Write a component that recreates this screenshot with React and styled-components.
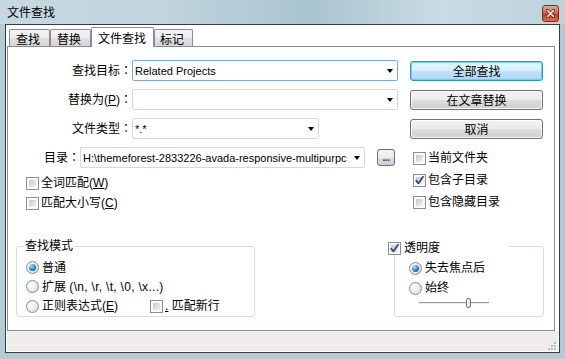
import React from "react";
import styled, { createGlobalStyle, css } from "styled-components";

const GlobalStyle = createGlobalStyle`
  html, body { margin: 0; padding: 0; background: #fff; }
  body {
    font-family: "Liberation Sans", "Noto Sans CJK SC", sans-serif;
    font-size: 12px;
    color: #000;
  }
  * { box-sizing: border-box; }
`;

const Window = styled.div`
  width: 565px;
  height: 359px;
  display: flex;
  flex-direction: column;
  background: #b3cbd5;
  overflow: hidden;
`;

const TitleBar = styled.div`
  height: 24px;
  flex: none;
  display: flex;
  align-items: flex-start;
  justify-content: space-between;
  padding: 0 6px 0 7px;
  background: linear-gradient(
    to right,
    #c6d9e1 0%,
    #bfd4dd 30%,
    #a9c4cf 55%,
    #c9dce3 78%,
    #bcd2db 100%
  );
`;

const Title = styled.span`
  font-family: "Noto Sans CJK SC", sans-serif;
  font-size: 12px;
  line-height: 24px;
`;

const CloseButton = styled.div`
  width: 17px;
  height: 17px;
  margin-top: 5px;
  border: 1px solid #7a2a1a;
  border-radius: 3px;
  background: linear-gradient(#e9a996 0%, #d9674a 45%, #c63d1e 55%, #d8704b 100%);
  display: flex;
  align-items: center;
  justify-content: center;
`;

const Frame = styled.div`
  flex: 1;
  display: flex;
  flex-direction: column;
  padding: 0 5px 6px 5px;
`;

const Client = styled.div`
  flex: 1;
  display: flex;
  flex-direction: column;
  border: 1px solid #3a3a3a;
  padding: 1px;
  background: #fff;
`;

const TabStrip = styled.div`
  height: 19px;
  margin: 1px 0 0 2px;
  display: flex;
  align-items: flex-end;
  position: relative;
  z-index: 2;
  flex: none;
`;

const Tab = styled.div`
  width: ${(p) => p.$w}px;
  height: ${(p) => (p.$active ? 20 : 17)}px;
  margin-bottom: ${(p) => (p.$active ? -1 : 0)}px;
  border: 1px solid #898c95;
  border-bottom: none;
  border-radius: 2px 2px 0 0;
  display: flex;
  align-items: center;
  justify-content: center;
  padding: ${(p) => (p.$active ? "1px 1px 0 0" : "2px 3px 0 0")};
  font-family: "Noto Sans CJK SC", sans-serif;
  font-size: 12px;
  line-height: 14px;
  background: ${(p) =>
    p.$active
      ? "#fff"
      : "linear-gradient(#f4f4f4 0%, #ececec 50%, #e0e0e0 51%, #d6d6d6 100%)"};
`;

const Pane = styled.div`
  width: 548px;
  height: 285px;
  flex: none;
  border: 1px solid #898c95;
  background: #fff;
  padding-top: 13px;
  display: flex;
  flex-direction: column;
`;

const Top = styled.div`
  display: grid;
  grid-template-columns: 402px 133px;
`;

const Column = styled.div`
  display: flex;
  flex-direction: column;
`;

const FieldRows = styled.div`
  display: flex;
  flex-direction: column;
  gap: 8px;
`;

const FieldRow = styled.div`
  height: 21px;
  display: flex;
  align-items: center;
`;

const FieldLabel = styled.span`
  width: ${(p) => p.$w}px;
  flex: none;
  text-align: right;
  white-space: nowrap;
  line-height: 14px;
`;

const Colon = styled.span`
  font-family: "Noto Sans CJK JP", sans-serif;
`;

const Combo = styled.div`
  width: ${(p) => p.$w}px;
  height: 21px;
  flex: none;
  border: 1px solid ${(p) => (p.$focus ? "#7eaad6" : "#d5d9df")};
  border-radius: 2px;
  background: #fff;
  display: flex;
  align-items: center;
  padding: 0 4px 0 2px;
  font-size: 11px;
  white-space: nowrap;
  overflow: hidden;
`;

const ComboText = styled.span`
  flex: 1;
  overflow: hidden;
`;

const Arrow = styled.span`
  flex: none;
  width: 0;
  height: 0;
  margin-left: 6px;
  border-left: 3.5px solid transparent;
  border-right: 3.5px solid transparent;
  border-top: 4px solid #000;
`;

const BrowseButton = styled.div`
  width: 18px;
  height: 17px;
  margin-left: 12px;
  flex: none;
  border: 1px solid #707070;
  border-radius: 3px;
  background: linear-gradient(#f3f3f3 0%, #ebebeb 50%, #dddddd 51%, #cfcfcf 100%);
  display: flex;
  align-items: flex-end;
  justify-content: center;
  padding-bottom: 1px;
  font-size: 10px;
  font-weight: bold;
  color: #1d3f7c;
  line-height: 12px;
  letter-spacing: -0.5px;
`;

const CheckList = styled.div`
  display: flex;
  flex-direction: column;
  margin-top: ${(p) => p.$mt}px;
  padding-left: ${(p) => p.$pl}px;
`;

const CheckRow = styled.div`
  height: ${(p) => p.$h}px;
  display: flex;
  align-items: center;
  gap: ${(p) => p.$gap ?? 2}px;
  white-space: nowrap;
  line-height: 14px;
`;

const Box = styled.span`
  width: 13px;
  height: 13px;
  flex: none;
  border: 1px solid #8e8f8f;
  padding: 2px;
  background: linear-gradient(135deg, #c8c8c8, #f2f2f2) content-box, #fbfbfb;
  display: flex;
  align-items: center;
  justify-content: center;
`;

const CheckSvg = styled.svg`
  width: 11px;
  height: 11px;
  margin: -2px;
  flex: none;
`;

const RadioCircle = styled.span`
  width: 13px;
  height: 13px;
  flex: none;
  border-radius: 50%;
  border: 1px solid #8b8b8b;
  background: radial-gradient(circle at 35% 35%, #ffffff 0%, #ececec 50%, #cfcfcf 100%);
  display: flex;
  align-items: center;
  justify-content: center;
  ${(p) =>
    p.$on &&
    css`
      &::after {
        content: "";
        width: 7px;
        height: 7px;
        border-radius: 50%;
        background: radial-gradient(circle at 35% 30%, #b6e6ff 0%, #3a93d8 45%, #0c3f7a 100%);
      }
    `}
`;

const Button = styled.div`
  height: 20px;
  margin-top: ${(p) => p.$mt}px;
  border: 1px solid ${(p) => (p.$default ? "#3c91c4" : "#707070")};
  border-radius: 3px;
  display: flex;
  align-items: center;
  justify-content: center;
  font-family: "Noto Sans CJK SC", sans-serif;
  font-size: 12px;
  line-height: 14px;
  background: ${(p) =>
    p.$default
      ? "linear-gradient(#e6f5fc 0%, #d6eefb 50%, #bfe3f7 51%, #a9d8f2 100%)"
      : "linear-gradient(#f3f3f3 0%, #ebebeb 50%, #dddddd 51%, #cfcfcf 100%)"};
  box-shadow: ${(p) =>
    p.$default ? "inset 0 0 0 1px #6fd0f5" : "inset 0 0 0 1px rgba(255,255,255,0.8)"};
`;

const Bottom = styled.div`
  margin-top: 33px;
  display: flex;
`;

const Group = styled.div`
  position: relative;
  width: ${(p) => p.$w}px;
  height: 71px;
  margin-left: ${(p) => p.$ml}px;
  border: 1px solid #d3dde4;
  border-radius: 3px;
  padding: 11px 0 0 ${(p) => p.$pl}px;
  display: flex;
  flex-direction: column;
  flex: none;
`;

const Legend = styled.span`
  position: absolute;
  top: -8px;
  left: 7px;
  padding: 0 1px;
  background: #fff;
  line-height: 14px;
`;

const GroupHeader = styled.div`
  position: absolute;
  top: -6px;
  left: -7px;
  width: 120px;
  height: 14px;
  background: #fff;
  display: flex;
  align-items: center;
  gap: 3px;
  line-height: 14px;
`;

const OptionSlot = styled.div`
  width: ${(p) => p.$w}px;
  flex: none;
  display: flex;
  align-items: center;
  gap: 3px;
`;

const Slider = styled.div`
  position: relative;
  width: 70px;
  height: 10px;
  margin-left: 10px;
`;

const Track = styled.div`
  margin-top: 4px;
  height: 2px;
  border-top: 1px solid #9c9c9c;
  border-bottom: 1px solid #ececec;
`;

const Thumb = styled.div`
  position: absolute;
  left: 47px;
  top: 0;
  width: 5px;
  height: 10px;
  border: 1px solid #7a7a7a;
  border-radius: 2px;
  background: linear-gradient(to right, #fdfdfd, #dcdcdc);
`;

const StatusBar = styled.div`
  flex: 1;
  background: #efeceb;
  display: flex;
  justify-content: flex-end;
  align-items: flex-end;
  padding: 0 1px 0 0;
`;

const U = styled.span`
  text-decoration: underline;
`;

const Latin = styled.span`
  font-size: 12px;
  letter-spacing: 0.3px;
`;

function Check({ on }) {
  return (
    <Box>
      {on && (
        <CheckSvg viewBox="0 0 11 11">
          <path
            d="M2.2 5.6 L4.4 8.4 L9 1.8"
            fill="none"
            stroke="#2b4c93"
            strokeWidth="1.8"
            strokeLinecap="round"
            strokeLinejoin="round"
          />
        </CheckSvg>
      )}
    </Box>
  );
}

function CheckItem({ on, h, children }) {
  return (
    <CheckRow $h={h}>
      <Check on={on} />
      <span>{children}</span>
    </CheckRow>
  );
}

function RadioItem({ on, children }) {
  return (
    <CheckRow $h={20} $gap={3}>
      <RadioCircle $on={on} />
      <span>{children}</span>
    </CheckRow>
  );
}

function Grip() {
  const dots = [
    [8, 2],
    [5, 5],
    [8, 5],
    [2, 8],
    [5, 8],
    [8, 8],
  ];
  return (
    <svg width="11" height="11" viewBox="0 0 11 11">
      {dots.map(([x, y]) => (
        <g key={`${x}-${y}`}>
          <rect x={x + 1} y={y + 1} width="2" height="2" fill="#ffffff" />
          <rect x={x} y={y} width="2" height="2" fill="#b9b6b4" />
        </g>
      ))}
    </svg>
  );
}

export default function App() {
  return (
    <>
      <GlobalStyle />
      <Window>
        <TitleBar>
          <Title>文件查找</Title>
          <CloseButton>
            <svg width="9" height="9" viewBox="0 0 9 9">
              <path d="M1.5 1.5 L7.5 7.5 M7.5 1.5 L1.5 7.5" stroke="#5a1a10" strokeWidth="3" strokeLinecap="round" />
              <path d="M1.5 1.5 L7.5 7.5 M7.5 1.5 L1.5 7.5" stroke="#ffffff" strokeWidth="1.6" strokeLinecap="round" />
            </svg>
          </CloseButton>
        </TitleBar>
        <Frame>
          <Client>
            <TabStrip>
              <Tab $w={41}>查找</Tab>
              <Tab $w={41}>替换</Tab>
              <Tab $w={63} $active>
                文件查找
              </Tab>
              <Tab $w={39}>标记</Tab>
            </TabStrip>
            <Pane>
              <Top>
                <Column>
                  <FieldRows>
                    <FieldRow>
                      <FieldLabel $w={124}>
                        查找目标<Colon>：</Colon>
                      </FieldLabel>
                      <Combo $w={266} $focus>
                        <ComboText>Related Projects</ComboText>
                        <Arrow />
                      </Combo>
                    </FieldRow>
                    <FieldRow>
                      <FieldLabel $w={124}>
                        替换为(<U>P</U>)<Colon>：</Colon>
                      </FieldLabel>
                      <Combo $w={266}>
                        <ComboText />
                        <Arrow />
                      </Combo>
                    </FieldRow>
                    <FieldRow>
                      <FieldLabel $w={124}>
                        文件类型<Colon>：</Colon>
                      </FieldLabel>
                      <Combo $w={187}>
                        <ComboText>*.*</ComboText>
                        <Arrow />
                      </Combo>
                    </FieldRow>
                    <FieldRow>
                      <FieldLabel $w={72}>
                        目录<Colon>：</Colon>
                      </FieldLabel>
                      <Combo $w={285}>
                        <ComboText>H:\themeforest-2833226-avada-responsive-multipurpc</ComboText>
                        <Arrow />
                      </Combo>
                      <BrowseButton>...</BrowseButton>
                    </FieldRow>
                  </FieldRows>
                  <CheckList $mt={5} $pl={18}>
                    <CheckItem h={20}>
                      全词匹配(<U>W</U>)
                    </CheckItem>
                    <CheckItem h={20}>
                      匹配大小写(<U>C</U>)
                    </CheckItem>
                  </CheckList>
                </Column>
                <Column>
                  <Button $mt={1} $default>
                    全部查找
                  </Button>
                  <Button $mt={9}>在文章替换</Button>
                  <Button $mt={9}>取消</Button>
                  <CheckList $mt={8} $pl={3}>
                    <CheckItem h={22}>当前文件夹</CheckItem>
                    <CheckItem h={22} on>
                      包含子目录
                    </CheckItem>
                    <CheckItem h={22}>包含隐藏目录</CheckItem>
                  </CheckList>
                </Column>
              </Top>
              <Bottom>
                <Group $w={239} $ml={8} $pl={9}>
                  <Legend>查找模式</Legend>
                  <RadioItem on>普通</RadioItem>
                  <RadioItem>
                    扩展 <Latin>(\n, \r, \t, \0, \x...)</Latin>
                  </RadioItem>
                  <CheckRow $h={20}>
                    <OptionSlot $w={122}>
                      <RadioCircle />
                      <span>
                        正则表达式(<U>E</U>)
                      </span>
                    </OptionSlot>
                    <Check />
                    <span>
                      <U>.</U> 匹配新行
                    </span>
                  </CheckRow>
                </Group>
                <Group $w={150} $ml={139} $pl={14}>
                  <GroupHeader>
                    <Check on />
                    <span>透明度</span>
                  </GroupHeader>
                  <RadioItem on>失去焦点后</RadioItem>
                  <RadioItem>始终</RadioItem>
                  <Slider>
                    <Track />
                    <Thumb />
                  </Slider>
                </Group>
              </Bottom>
            </Pane>
            <StatusBar>
              <Grip />
            </StatusBar>
          </Client>
        </Frame>
      </Window>
    </>
  );
}
